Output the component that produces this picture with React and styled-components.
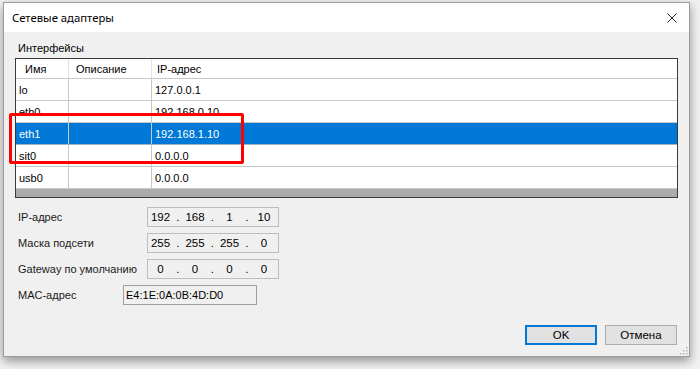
import React from "react";
import styled, { createGlobalStyle } from "styled-components";

const GlobalStyle = createGlobalStyle`
  html, body { margin: 0; padding: 0; }
  body {
    background: #f2f2f2;
    font-family: "Liberation Sans", Arial, sans-serif;
    font-size: 11px;
    color: #000;
  }
`;

const Screen = styled.div`
  position: relative;
  width: 700px;
  height: 369px;
  overflow: hidden;
  padding: 2px 0 0 3px;
  box-sizing: border-box;
`;

const Window = styled.div`
  width: 687px;
  height: 355px;
  box-sizing: border-box;
  border: 1px solid #9c9c9c;
  background: #f0f0f0;
  display: flex;
  flex-direction: column;
  box-shadow: 0 4px 10px rgba(0, 0, 0, 0.4);
  position: relative;
`;

const TitleBar = styled.div`
  height: 29px;
  flex: none;
  background: #fff;
  display: flex;
  align-items: center;
  justify-content: space-between;
  padding: 0 12px 0 8px;
  font-family: "Noto Sans", "Open Sans", sans-serif;
  font-size: 11.3px;
  color: #000;
`;

const CloseIcon = styled.svg`
  width: 10px;
  height: 10px;
  display: block;
`;

const Body = styled.div`
  flex: 1;
  display: flex;
  flex-direction: column;
  padding: 9px 11px 11px 11px;
`;

const GroupLabel = styled.div`
  line-height: 14px;
  padding-left: 3px;
  margin-bottom: 3px;
`;

const ListView = styled.div`
  height: 140px;
  box-sizing: border-box;
  border: 1px solid #3a3a3a;
  background: #fff;
  display: flex;
  flex-direction: column;
`;

const Row = styled.div`
  display: grid;
  grid-template-columns: 53px 83px 1fr;
  height: ${(p) => (p.$header ? 20 : 22)}px;
  box-sizing: border-box;
  border-bottom: 1px solid ${(p) => (p.$selected ? "#9fb4c8" : "#c9c9c9")};
  background: ${(p) => (p.$selected ? "#0078d7" : "#fff")};
  color: ${(p) => (p.$selected ? "#fff" : "#000")};
`;

const Cell = styled.div`
  display: flex;
  align-items: center;
  padding-left: ${(p) => p.$pad}px;
  border-right: ${(p) => (p.$last ? "none" : `1px solid ${p.$header ? "#e3e3e3" : "#c9c9c9"}`)};
  white-space: nowrap;
  overflow: hidden;
`;

const ScrollStrip = styled.div`
  flex: 1;
  background: #ababab;
`;

const Fields = styled.div`
  margin-top: 9px;
  display: flex;
  flex-direction: column;
  gap: 6px;
  padding-left: 3px;
`;

const FieldRow = styled.div`
  display: flex;
  align-items: center;
  height: 20px;
`;

const FieldLabel = styled.div`
  width: ${(p) => p.$w}px;
  flex: none;
  color: #1a1a1a;
`;

const IpBox = styled.div`
  width: 132px;
  height: 20px;
  box-sizing: border-box;
  border: 1px solid #bdbdbd;
  background: #f0f0f0;
  display: flex;
  align-items: center;
  padding-left: 1px;
`;

const Octet = styled.span`
  width: 23px;
  text-align: center;
  font-size: 11.5px;
`;

const Dot = styled.span`
  width: 11.5px;
  text-align: center;
  font-size: 11.5px;
`;

const MacBox = styled.div`
  width: 134px;
  height: 20px;
  box-sizing: border-box;
  border: 1px solid #9e9e9e;
  background: #f0f0f0;
  display: flex;
  align-items: center;
  padding-left: 2px;
`;

const ButtonRow = styled.div`
  margin-top: auto;
  display: flex;
  justify-content: flex-end;
  gap: 8px;
  padding-right: 1px;
`;

const Button = styled.button`
  width: 72px;
  height: 20px;
  box-sizing: border-box;
  background: #e1e1e1;
  border: ${(p) => (p.$default ? "2px solid #0078d7" : "1px solid #adadad")};
  font-family: "Liberation Sans", Arial, sans-serif;
  font-size: 11.5px;
  color: #000;
  padding: 0;
  display: flex;
  align-items: center;
  justify-content: center;
`;

const Grip = styled.svg`
  position: absolute;
  right: 1px;
  bottom: 1px;
  width: 9px;
  height: 9px;
`;

const Annotation = styled.div`
  position: absolute;
  left: 9px;
  top: 113px;
  width: 235px;
  height: 51px;
  box-sizing: border-box;
  border: 3px solid #ff0000;
  border-radius: 2px;
  pointer-events: none;
`;

const adapters = [
  { name: "lo", ip: "127.0.0.1" },
  { name: "eth0", ip: "192.168.0.10" },
  { name: "eth1", ip: "192.168.1.10", selected: true },
  { name: "sit0", ip: "0.0.0.0" },
  { name: "usb0", ip: "0.0.0.0" },
];

const ipFields = [
  { label: "IP-адрес", value: ["192", "168", "1", "10"] },
  { label: "Маска подсети", value: ["255", "255", "255", "0"] },
  { label: "Gateway по умолчанию", value: ["0", "0", "0", "0"] },
];

function IpInput({ parts }) {
  return (
    <IpBox>
      {parts.map((p, i) => (
        <React.Fragment key={i}>
          <Octet>{p}</Octet>
          {i < 3 && <Dot>.</Dot>}
        </React.Fragment>
      ))}
    </IpBox>
  );
}

export default function App() {
  return (
    <>
      <GlobalStyle />
      <Screen>
        <Window>
          <TitleBar>
            <span>Сетевые адаптеры</span>
            <CloseIcon viewBox="0 0 10 10">
              <path d="M0.5 0.5 L9.5 9.5 M9.5 0.5 L0.5 9.5" stroke="#1e1e1e" strokeWidth="1" fill="none" />
            </CloseIcon>
          </TitleBar>
          <Body>
            <GroupLabel>Интерфейсы</GroupLabel>
            <ListView>
              <Row $header>
                <Cell $header $pad={9}>Имя</Cell>
                <Cell $header $pad={7}>Описание</Cell>
                <Cell $header $last $pad={5}>IP-адрес</Cell>
              </Row>
              {adapters.map((a) => (
                <Row key={a.name} $selected={a.selected}>
                  <Cell $pad={3}>{a.name}</Cell>
                  <Cell $pad={3}></Cell>
                  <Cell $last $pad={3}>{a.ip}</Cell>
                </Row>
              ))}
              <ScrollStrip />
            </ListView>
            <Fields>
              {ipFields.map((f) => (
                <FieldRow key={f.label}>
                  <FieldLabel $w={129}>{f.label}</FieldLabel>
                  <IpInput parts={f.value} />
                </FieldRow>
              ))}
              <FieldRow>
                <FieldLabel $w={105}>MAC-адрес</FieldLabel>
                <MacBox>E4:1E:0A:0B:4D:D0</MacBox>
              </FieldRow>
            </Fields>
            <ButtonRow>
              <Button $default>OK</Button>
              <Button>Отмена</Button>
            </ButtonRow>
          </Body>
          <Grip viewBox="0 0 9 9">
            {[
              [7, 1], [7, 4], [4, 4], [7, 7], [4, 7], [1, 7],
            ].map(([x, y], i) => (
              <rect key={i} x={x} y={y} width="1.5" height="1.5" fill="#b5b5b5" />
            ))}
          </Grip>
        </Window>
        <Annotation />
      </Screen>
    </>
  );
}
